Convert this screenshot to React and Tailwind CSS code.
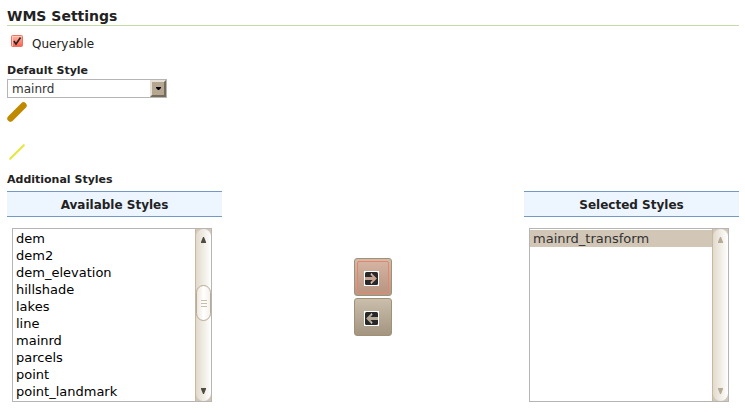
import { useState } from "react";

const AVAILABLE = [
  "dem",
  "dem2",
  "dem_elevation",
  "hillshade",
  "lakes",
  "line",
  "mainrd",
  "parcels",
  "point",
  "point_landmark",
];

function ScrollBar({ active }) {
  const arrow = active ? "fill-[#4f4a44]" : "fill-[#b5aa96]";
  return (
    <div aria-hidden="true" className="flex w-4 shrink-0 border-l border-[#c5b9a5] bg-[#d3c8b8]">
      <div className="flex flex-1 flex-col items-center rounded-full bg-linear-to-r from-[#e2dacb] to-white pt-2 pb-[7px]">
        <svg className={"h-1.5 w-[5px] " + arrow} viewBox="0 0 5 6">
          <path d="M2 0 H3 L5 5 V6 H0 V5 Z" />
        </svg>
        {active && (
          <div className="mt-[42px] flex h-9 w-full flex-col items-center justify-center gap-[2px] rounded-lg border border-[#b9ab93] bg-linear-to-r from-[#ede7dc] via-white to-[#f6f2eb]">
            <span className="h-px w-1.5 bg-[#c8bda8]" />
            <span className="h-px w-1.5 bg-[#c8bda8]" />
            <span className="h-px w-1.5 bg-[#c8bda8]" />
          </div>
        )}
        <svg className={"mt-auto h-1.5 w-[5px] " + arrow} viewBox="0 0 5 6">
          <path d="M0 0 H5 V1 L3 6 H2 L0 1 Z" />
        </svg>
      </div>
    </div>
  );
}

function StyleList({ id, title, items, selected, active }) {
  return (
    <section className="w-[215px]">
      <label
        htmlFor={id}
        className="block border-y border-[#7399c4] bg-[#edf5ff] pt-[5px] pb-[3px] text-center text-xs font-bold"
      >
        {title}
      </label>
      <div className="mt-[11px] mr-2.5 ml-[5px] flex h-[174px] border border-[#b5b5b5]">
        <select
          id={id}
          multiple
          defaultValue={selected}
          className="min-w-0 flex-1 overflow-hidden py-px text-[13px] text-black outline-none [scrollbar-width:none]"
        >
          {items.map((name) => (
            <option
              key={name}
              value={name}
              className="h-[17px] min-h-0 px-[3px] pt-px pb-0 leading-4 checked:bg-[#d2c6b6] checked:text-[#333333]"
            >
              {name}
            </option>
          ))}
        </select>
        <ScrollBar active={active} />
      </div>
    </section>
  );
}

function ArrowIcon({ left }) {
  const arrow = left ? "#b5a997" : "#c6a392";
  return (
    <svg className={left ? "size-[15px] -scale-x-100" : "size-[15px]"} viewBox="0 0 15 15">
      <rect width="15" height="15" fill="#fff" />
      <rect x="1" y="1" width="13" height="13" rx="1.5" fill="#282828" />
      <path d="M1 7.5 H11" stroke={arrow} strokeWidth="3" />
      <path d="M7.5 3.5 L11.5 7.5 L7.5 11.5" fill="none" stroke={arrow} strokeWidth="2" strokeLinecap="round" />
      <path d="M7 3 H8 M7 12 H8" stroke="#f1e9e4" strokeWidth="1" />
    </svg>
  );
}

export default function App() {
  const [queryable, setQueryable] = useState(true);
  return (
    <main className="bg-white pt-2 pr-1.5 pl-[7px] font-['DejaVu_Sans',Verdana,sans-serif] text-xs text-[#222222]">
      <h1 className="border-b border-[#c5dba5] text-sm leading-[17px] font-bold">WMS Settings</h1>

      <div className="mt-2 flex h-5 items-center pl-1">
        <input
          id="queryable"
          type="checkbox"
          checked={queryable}
          onChange={(e) => setQueryable(e.target.checked)}
          className="sr-only"
        />
        <label htmlFor="queryable" className="flex items-start gap-[9px]">
          <svg className="size-3" viewBox="0 0 12 12">
            <defs>
              <linearGradient id="tick-box" x1="0" y1="0" x2="0" y2="1">
                <stop offset="0" stopColor="#ffb7a8" />
                <stop offset="1" stopColor="#fa6450" />
              </linearGradient>
            </defs>
            <rect x="0.5" y="0.5" width="11" height="11" rx="1" fill="url(#tick-box)" stroke="#ea7462" />
            <path d="M1.5 11 V1.5 H10.5" fill="none" stroke="#ffcabf" strokeWidth="1" />
            {queryable && (
              <path d="M2.8 6 L5 9 L9.5 2.5" fill="none" stroke="#33201e" strokeWidth="1.6" />
            )}
          </svg>
          <span className="leading-[18px]">Queryable</span>
        </label>
      </div>

      <label htmlFor="default-style" className="mt-2 block text-[11px] leading-[17px] font-bold">
        Default Style
      </label>
      <div className="flex h-[19px] w-40 border border-[#b5b5b5]">
        <select
          id="default-style"
          className="min-w-0 flex-1 appearance-none pt-px pl-1 text-xs leading-4 text-[#333333] outline-none"
        >
          <option>mainrd</option>
        </select>
        <span
          aria-hidden="true"
          className="pointer-events-none flex w-4 items-center justify-center border-2 border-t-[#e6e0d7] border-r-[#766a5b] border-b-[#766a5b] border-l-[#e6e0d7] bg-[#b5a692]"
        >
          <svg className="h-[3px] w-[5px]" viewBox="0 0 5 3">
            <path d="M0 0 H5 V1 L3 3 H2 L0 1 Z" />
          </svg>
        </span>
      </div>

      <svg className="mt-1 block h-[60px] w-5" viewBox="0 0 20 60" fill="none" strokeLinecap="round">
        <path d="M3.5 16.5 L16.5 3.5" stroke="#c08a00" strokeWidth="6.4" />
        <path d="M3.2 56.8 L16.8 43.2" stroke="#e6e645" strokeWidth="2.2" />
      </svg>

      <h2 className="mt-[9px] text-[11px] leading-[17px] font-bold">Additional Styles</h2>
      <div className="mt-[3px] flex justify-between">
        <StyleList id="available" title="Available Styles" items={AVAILABLE} selected={[]} active />
        <div className="flex flex-col justify-center gap-0.5">
          <button
            type="button"
            aria-label="Add style"
            className="size-[38px] rounded-[3px] border border-[#a09176] bg-linear-to-b from-[#cdbdac] to-[#b09b88] p-0.5"
          >
            <span className="flex size-full items-center justify-center rounded-xs border border-[#f47f69] bg-linear-to-b from-[#d5b3a2] to-[#b99682] pt-[3px] pr-[3px]">
              <ArrowIcon />
            </span>
          </button>
          <button
            type="button"
            aria-label="Remove style"
            className="flex size-[38px] items-center justify-center rounded-[3px] border border-[#a09176] bg-linear-to-b from-[#cabeac] to-[#a39580] pt-[3px] pr-[3px]"
          >
            <ArrowIcon left />
          </button>
        </div>
        <StyleList
          id="selected"
          title="Selected Styles"
          items={["mainrd_transform"]}
          selected={["mainrd_transform"]}
        />
      </div>
    </main>
  );
}
